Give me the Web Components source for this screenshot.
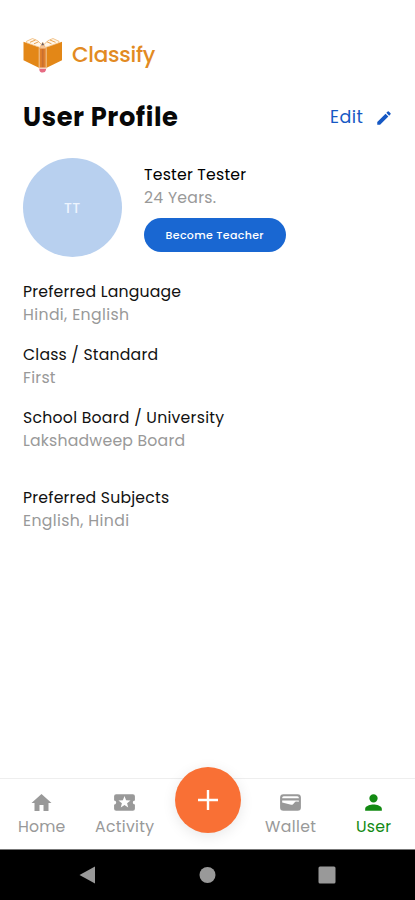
<!DOCTYPE html>
<html lang="en">
<head>
<meta charset="utf-8">
<title>Classify</title>
<style>
html,body{margin:0;height:100%;background:#fff}
body{font-family:Poppins,Inter,"Open Sans",sans-serif;font-feature-settings:"cv11","ss03"}
</style>
</head>
<body>
<profile-app></profile-app>
<script>
// Single line of text whose tracking is set so that it spans a given width.
class FitText extends HTMLElement{
  connectedCallback(){
    const s=+this.getAttribute('size'),w=+this.getAttribute('w'),l=+(this.getAttribute('line')||24);
    this.attachShadow({mode:'open'}).innerHTML=`<style>
      :host{display:block;white-space:nowrap;width:${w}px;height:${l}px;font-size:${s}px;line-height:${l}px;font-weight:${this.getAttribute('weight')||400}}
      span{display:inline-block}</style><span><slot></slot></span>`;
    const sp=this.shadowRoot.querySelector('span'),n=this.textContent.length;
    const d=(w-.8-sp.getBoundingClientRect().width)/(n-.5);
    sp.style.letterSpacing=d+'px';
  }
}
customElements.define('fit-text',FitText);

const define=(name,html)=>customElements.define(name,class extends HTMLElement{
  connectedCallback(){
    if(this.shadowRoot)return;
    const t=document.createElement('template');t.innerHTML=html;
    this.attachShadow({mode:'open'}).append(t.content.cloneNode(true));
  }
});

define('brand-logo',`<style>:host{display:flex;align-items:center;gap:9px;color:#e28a22;height:40px}svg{display:block}</style>
<svg width="40" height="38" viewBox="0 0 40 38">
  <path d="M.5 5.800 19.400 12.500V33.500L.5 24.300z" fill="#e38717"/><path d="M39 5.800 20.100 12.500V33.500L39 24.300z" fill="#e38717"/>
  <path d="M3.500 5.300 9.500 2.500Q15.500 4 18.500 8.500V12L3.500 6.800z" fill="#fff6e8" stroke="#edae62" stroke-width=".7"/>
  <path d="M36 5.300 30 2.500Q24 4 21 8.500V12L36 6.800z" fill="#fff6e8" stroke="#edae62" stroke-width=".7"/>
  <path d="M7 6.300 12.500 4M11 7.800 15.500 5.800M32.500 6.300 27 4M28.500 7.800 24 5.800" stroke="#e79b42" stroke-width=".9"/>
  <path d="M16.200 12.500 19.700 6 23.200 12.500V32.500H16.200z" fill="#e07f2c" stroke="#f9dcb6" stroke-width=".8"/>
  <path d="M16.700 12.500 19.700 6.500 22.700 12.500z" fill="#f6c79a"/><path d="M18.300 9.200 19.700 6.200 21.100 9.200z" fill="#665b62"/>
  <path d="M19.700 13V31.500" stroke="#c96f30" stroke-width="1.800"/>
  <path d="M16.400 31.500H23V33.300H16.400z" fill="#f3cfc4"/><path d="M16.400 33H23V34Q22.500 36.600 19.700 36.600T16.400 34z" fill="#e66b83"/>
</svg><slot></slot>`);

define('title-bar',`<style>:host{display:flex;justify-content:space-between;align-items:center;height:32px}
.edit{display:flex;align-items:center;gap:11px;color:#1658c4}svg{display:block;margin-top:1px}</style>
<slot name="title"></slot><div class="edit"><slot name="action"></slot>
<svg width="18" height="18" viewBox="0 0 24 24" fill="currentColor"><path d="M3 17.250V21h3.750L17.810 9.940l-3.750-3.750L3 17.250zM20.710 7.040a1 1 0 0 0 0-1.410l-2.340-2.340a1 1 0 0 0-1.410 0l-1.830 1.830 3.750 3.750 1.830-1.830z"/></svg></div>`);

define('user-summary',`<style>:host{display:flex;gap:22px;height:100px}
.avatar{width:99px;height:99px;border-radius:50%;background:#b8d0ef;color:#edf4fe;display:grid;place-items:center}
.info{padding-top:5px}.years{color:#999;margin-top:-1px}
.btn{margin-top:9px;width:142px;height:34px;border-radius:17px;background:#1967d2;color:#fff;display:grid;place-items:center}</style>
<div class="avatar"><fit-text size="14" w="17" weight="500">TT</fit-text></div>
<div class="info"><fit-text size="15.700" w="103" line="23.500">Tester Tester</fit-text>
<fit-text class="years" size="15.700" w="73" line="23.500">24 Years.</fit-text>
<div class="btn"><fit-text size="11" w="99" weight="500" line="22">Become Teacher</fit-text></div></div>`);

define('info-field',`<style>:host{display:block;color:#111}.v{color:#999;margin-top:-1px;padding-bottom:1px}</style><slot name="label"></slot><div class="v"><slot></slot></div>`);

const icons={
 home:'<path d="M10 20v-6h4v6h5v-8h3L12 3 2 12h3v8z"/>',
 activity:'<path d="M20 12c0-1.100.9-2 2-2V6a2 2 0 0 0-2-2H4a2 2 0 0 0-1.990 2v4c1.100 0 1.990.9 1.990 2s-.890 2-2 2v4a2 2 0 0 0 2 2h16a2 2 0 0 0 2-2v-4a2 2 0 0 1-2-2zm-4.420 4.800L12 14.500l-3.580 2.300 1.080-4.120-3.290-2.690 4.240-.250L12 5.800l1.540 3.950 4.240.250-3.290 2.690 1.090 4.110z"/>',
 wallet:'<path fill-rule="evenodd" d="M18.800 4H5.200A3.200 3.200 0 0 0 2 7.200v9.600A3.200 3.200 0 0 0 5.200 20h13.600a3.200 3.200 0 0 0 3.200-3.200V7.200A3.200 3.200 0 0 0 18.800 4zM5.500 6h13a1.500 1.500 0 0 1 1.500 1.500v.5H4v-.5A1.500 1.500 0 0 1 5.500 6zM4 10h16v1.200l-2.500-.1q-1 0-1.600.8l-1.500 1.700q-.8.800-1.800.500L4 12z"/>',
 user:'<path d="M12 12a4 4 0 1 0 0-8 4 4 0 0 0 0 8zm0 2c-2.670 0-8 1.340-8 4v2h16v-2c0-2.660-5.330-4-8-4z"/>'
};
customElements.define('nav-item',class extends HTMLElement{
  connectedCallback(){
    this.attachShadow({mode:'open'}).innerHTML=`<style>:host{display:flex;flex-direction:column;align-items:center;color:#999;padding:11px 0 0 1px}
    :host([active]){color:#138a13}svg{display:block;margin-right:1.500px}</style>
    <svg width="25" height="25" viewBox="0 0 24 24" fill="currentColor">${icons[this.getAttribute('icon')]}</svg><slot></slot>`;
    if(this.getAttribute('icon')==='home')this.shadowRoot.querySelector('svg').setAttribute('viewBox','-.5 -1 25 25');
  }
});

define('tab-bar',`<style>:host{display:grid;height:72px;border-top:1px solid #eee;border-bottom:1px solid #777;background:#fff;box-sizing:border-box;position:relative}
.fab{position:absolute;left:50%;top:-12px;width:66px;height:66px;margin-left:-32.500px;border-radius:50%;background:#f97035;box-shadow:0 3px 14px #00000018;display:grid;place-items:center}</style>
<slot></slot><div class="fab"><svg width="22" height="22"><path d="M11 1V21M1 11H21" stroke="#fff" stroke-width="2.400"/></svg></div>`);

define('system-bar',`<style>:host{display:grid;grid-template-columns:1fr 1fr 1fr;height:50px;background:#000;padding:0 28px;box-sizing:border-box;align-items:center;justify-items:center}svg{display:block}</style>
<svg width="18" height="18"><path d="M.5 9 16 .5V17.500z" fill="#999"/></svg>
<svg width="18" height="18"><circle cx="9.500" cy="9" r="8" fill="#999"/></svg>
<svg width="18" height="18"><rect x=".5" y=".5" width="17" height="17" rx="1.500" fill="#999"/></svg>`);

define('profile-app',`<style>
:host{display:flex;flex-direction:column;width:100%;height:900px;overflow:hidden}
main{flex:1;padding:35px 22px 0 23px}
title-bar{margin-top:26px;color:#080808}user-summary{margin-top:25px}
.fields{display:flex;flex-direction:column;gap:16px;margin-top:22px}.gap{margin-top:17px}
tab-bar{grid-template-columns:83px 83px 83px 83px 83px}
</style>
<main>
<brand-logo><fit-text size="21.500" w="84" weight="500">Classify</fit-text></brand-logo>
<title-bar><fit-text slot="title" size="25.700" w="156" weight="700" line="33">User Profile</fit-text><fit-text slot="action" size="17.500" w="34" line="26">Edit</fit-text></title-bar>
<user-summary></user-summary>
<div class="fields">
<info-field><fit-text slot="label" size="15.700" w="159" line="23.500">Preferred Language</fit-text><fit-text size="15.700" w="107" line="23.500">Hindi, English</fit-text></info-field>
<info-field><fit-text slot="label" size="15.700" w="136" line="23.500">Class / Standard</fit-text><fit-text size="15.700" w="33.500" line="23.500">First</fit-text></info-field>
<info-field><fit-text slot="label" size="15.700" w="202" line="23.500">School Board / University</fit-text><fit-text size="15.700" w="163" line="23.500">Lakshadweep Board</fit-text></info-field>
<info-field class="gap"><fit-text slot="label" size="15.700" w="147" line="23.500">Preferred Subjects</fit-text><fit-text size="15.700" w="107" line="23.500">English, Hindi</fit-text></info-field>
</div>
</main>
<tab-bar>
<nav-item icon="home"><fit-text size="15.700" w="48">Home</fit-text></nav-item>
<nav-item icon="activity"><fit-text size="15.700" w="60">Activity</fit-text></nav-item>
<span></span>
<nav-item icon="wallet"><fit-text size="15.700" w="52">Wallet</fit-text></nav-item>
<nav-item icon="user" active><fit-text size="15.700" w="36">User</fit-text></nav-item>
</tab-bar>
<system-bar></system-bar>`);
</script>
</body>
</html>
